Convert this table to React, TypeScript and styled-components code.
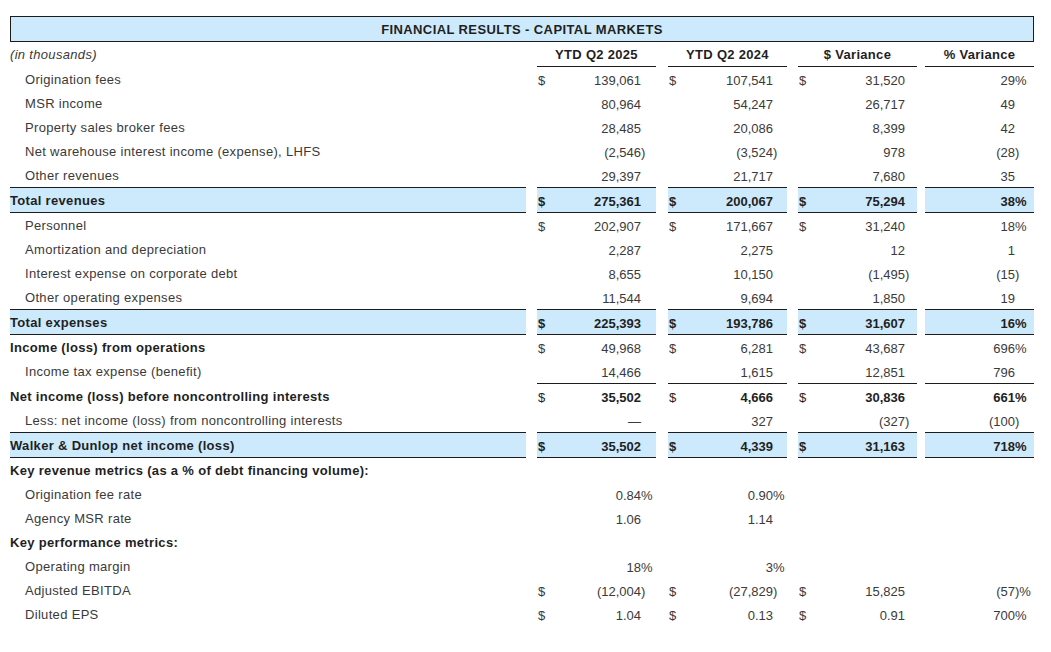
import styled, { createGlobalStyle } from "styled-components";

const GlobalStyle = createGlobalStyle`
  html, body {
    margin: 0;
    padding: 0;
    background: #fff;
  }
  body {
    font-family: "Liberation Sans", Arial, Helvetica, sans-serif;
    font-size: 13px;
    color: #3a3a3a;
  }
`;

const HIGHLIGHT = "#cdeafc";
const RULE = "#1c1c1c";

// label | gap | 2025 | gap | 2024 | gap | $ var | gap | % var
const COLUMNS = "516px 11px 119px 12px 119px 11px 119px 8px 109px";
const SUFFIX = [15, 14, 12, 19];

const Page = styled.div`
  padding: 16px 17px 0 10px;
  width: 1024px;
`;

const TitleBar = styled.div`
  height: 23px;
  padding-top: 1px;
  line-height: 23px;
  border: 1px solid ${RULE};
  background: ${HIGHLIGHT};
  text-align: center;
  font-weight: 700;
  color: #1f1f1f;
  letter-spacing: 0.4px;
`;

const Row = styled.div`
  display: grid;
  grid-template-columns: ${COLUMNS};
  align-items: stretch;
`;

type Rule = "all" | "values" | "none";

const LabelCell = styled.div<{
  $indent?: boolean;
  $bold?: boolean;
  $italic?: boolean;
  $hl?: boolean;
  $rule?: boolean;
}>`
  height: 22px;
  padding-top: 2px;
  line-height: 22px;
  padding-left: ${(p) => (p.$indent ? "15px" : "0")};
  font-weight: ${(p) => (p.$bold ? 700 : 400)};
  font-style: ${(p) => (p.$italic ? "italic" : "normal")};
  letter-spacing: 0.32px;
  color: ${(p) => (p.$bold ? "#1f1f1f" : "#3a3a3a")};
  background: ${(p) => (p.$hl ? HIGHLIGHT : "transparent")};
  border-bottom: ${(p) => (p.$rule ? `1px solid ${RULE}` : "none")};
  white-space: nowrap;
`;

const Gap = styled.div``;

const ValueCell = styled.div<{ $hl?: boolean; $rule?: boolean; $bold?: boolean }>`
  display: flex;
  align-items: center;
  height: 22px;
  padding: 2px 0 0 1px;
  background: ${(p) => (p.$hl ? HIGHLIGHT : "transparent")};
  border-bottom: ${(p) => (p.$rule ? `1px solid ${RULE}` : "none")};
  font-weight: ${(p) => (p.$bold ? 700 : 400)};
  color: ${(p) => (p.$bold ? "#1f1f1f" : "#3a3a3a")};
`;

const HeadCell = styled.div`
  height: 22px;
  padding-top: 2px;
  line-height: 22px;
  text-align: center;
  font-weight: 700;
  letter-spacing: 0.3px;
  color: #1f1f1f;
  border-bottom: 1px solid ${RULE};
`;

const Dollar = styled.span<{ $bold?: boolean }>`
  font-weight: ${(p) => (p.$bold ? 700 : 400)};
`;

const Amount = styled.span`
  flex: 1;
  text-align: right;
  white-space: nowrap;
`;

const Suffix = styled.span<{ $w: number }>`
  width: ${(p) => p.$w}px;
  flex-shrink: 0;
  text-align: left;
  white-space: nowrap;
`;

interface LineItem {
  label: string;
  values?: string[];
  dollar?: boolean;
  indent?: boolean;
  bold?: boolean;
  boldValues?: boolean;
  hl?: boolean;
  rule?: Rule;
}

const lines: LineItem[] = [
  { label: "Origination fees", indent: true, dollar: true, values: ["139,061", "107,541", "31,520", "29%"] },
  { label: "MSR income", indent: true, values: ["80,964", "54,247", "26,717", "49"] },
  { label: "Property sales broker fees", indent: true, values: ["28,485", "20,086", "8,399", "42"] },
  { label: "Net warehouse interest income (expense), LHFS", indent: true, values: ["(2,546)", "(3,524)", "978", "(28)"] },
  { label: "Other revenues", indent: true, rule: "all", values: ["29,397", "21,717", "7,680", "35"] },
  { label: "Total revenues", bold: true, boldValues: true, hl: true, dollar: true, rule: "all", values: ["275,361", "200,067", "75,294", "38%"] },
  { label: "Personnel", indent: true, dollar: true, values: ["202,907", "171,667", "31,240", "18%"] },
  { label: "Amortization and depreciation", indent: true, values: ["2,287", "2,275", "12", "1"] },
  { label: "Interest expense on corporate debt", indent: true, values: ["8,655", "10,150", "(1,495)", "(15)"] },
  { label: "Other operating expenses", indent: true, rule: "all", values: ["11,544", "9,694", "1,850", "19"] },
  { label: "Total expenses", bold: true, boldValues: true, hl: true, dollar: true, rule: "all", values: ["225,393", "193,786", "31,607", "16%"] },
  { label: "Income (loss) from operations", bold: true, dollar: true, values: ["49,968", "6,281", "43,687", "696%"] },
  { label: "Income tax expense (benefit)", indent: true, rule: "values", values: ["14,466", "1,615", "12,851", "796"] },
  { label: "Net income (loss) before noncontrolling interests", bold: true, boldValues: true, dollar: true, values: ["35,502", "4,666", "30,836", "661%"] },
  { label: "Less: net income (loss) from noncontrolling interests", indent: true, rule: "all", values: ["—", "327", "(327)", "(100)"] },
  { label: "Walker & Dunlop net income (loss)", bold: true, boldValues: true, hl: true, dollar: true, rule: "all", values: ["35,502", "4,339", "31,163", "718%"] },
  { label: "Key revenue metrics (as a % of debt financing volume):", bold: true },
  { label: "Origination fee rate", indent: true, values: ["0.84%", "0.90%", "", ""] },
  { label: "Agency MSR rate", indent: true, values: ["1.06", "1.14", "", ""] },
  { label: "Key performance metrics:", bold: true },
  { label: "Operating margin", indent: true, values: ["18%", "3%", "", ""] },
  { label: "Adjusted EBITDA", indent: true, dollar: true, values: ["(12,004)", "(27,829)", "15,825", "(57)%"] },
  { label: "Diluted EPS", indent: true, dollar: true, values: ["1.04", "0.13", "0.91", "700%"] },
];

// "(2,546)" -> ["(2,546", ")"], "29%" -> ["29", "%"]
const split = (v: string) => {
  const m = v.match(/^(.*?)([)%]*)$/);
  return m ? [m[1], m[2]] : [v, ""];
};

const headers = ["YTD Q2 2025", "YTD Q2 2024", "$ Variance", "% Variance"];

const Line = ({ item }: { item: LineItem }) => {
  const rule = item.rule ?? "none";
  const values = item.values ?? ["", "", "", ""];
  return (
    <Row>
      <LabelCell $indent={item.indent} $bold={item.bold} $hl={item.hl} $rule={rule === "all"}>
        {item.label}
      </LabelCell>
      {values.map((v, i) => {
        const [main, suffix] = split(v);
        return [
          <Gap key={`g${i}`} />,
          <ValueCell key={`v${i}`} $hl={item.hl} $rule={rule !== "none"} $bold={item.boldValues}>
            <Dollar $bold={item.hl}>{item.dollar && i < 3 ? "$" : ""}</Dollar>
            <Amount>{main}</Amount>
            <Suffix $w={SUFFIX[i]}>{suffix}</Suffix>
          </ValueCell>,
        ];
      })}
    </Row>
  );
};

const App = () => (
  <>
    <GlobalStyle />
    <Page>
      <TitleBar>FINANCIAL RESULTS - CAPITAL MARKETS</TitleBar>
      <Row>
        <LabelCell $italic>(in thousands)</LabelCell>
        {headers.map((h) => [<Gap key={`hg${h}`} />, <HeadCell key={h}>{h}</HeadCell>])}
      </Row>
      {lines.map((item) => (
        <Line key={item.label} item={item} />
      ))}
    </Page>
  </>
);

export default App;
